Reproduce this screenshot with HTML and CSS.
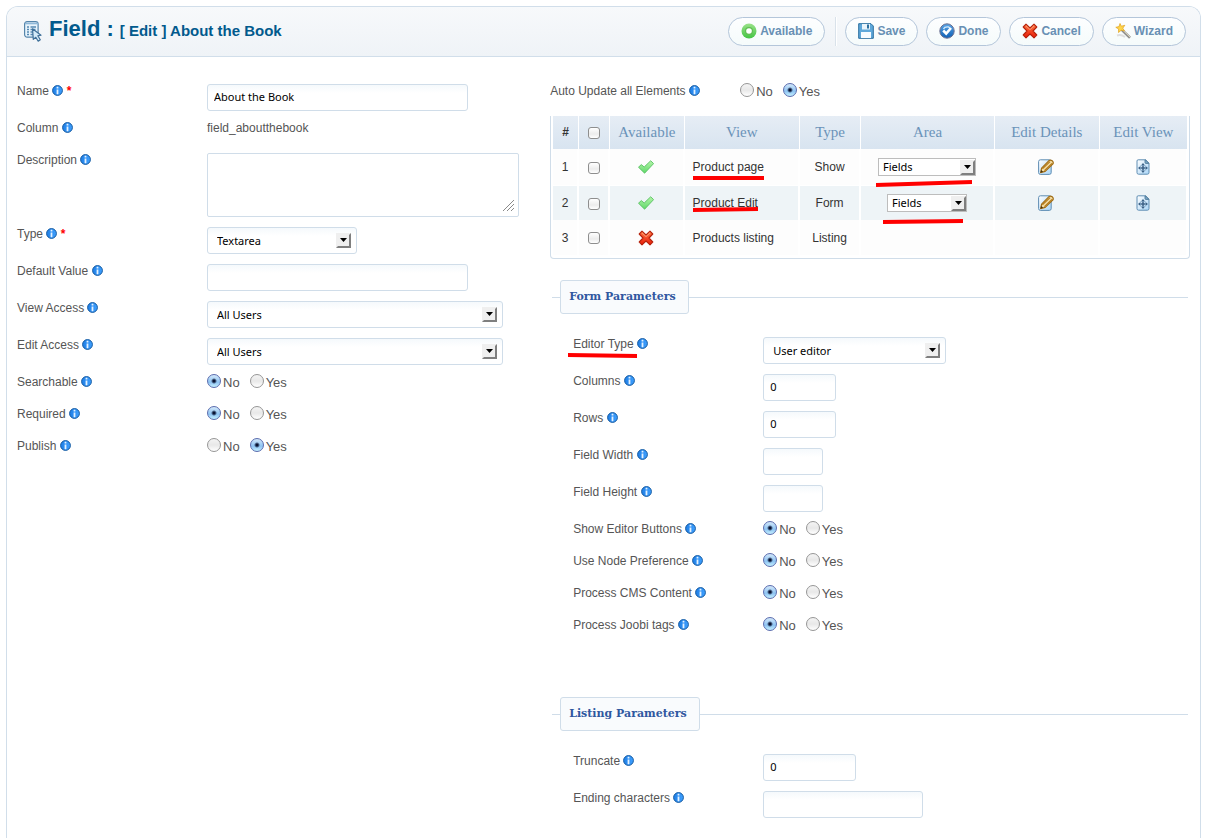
FILE: index.html
```html
<!DOCTYPE html>
<html lang="en">
<head>
<meta charset="utf-8">
<title>Field : [ Edit ] About the Book</title>
<link rel="stylesheet" href="styles.css">
</head>
<body>
<svg class="defs" aria-hidden="true">
  <defs>
    <linearGradient id="g-info" x1="0" y1="0" x2="1" y2="0"><stop offset="0" stop-color="#1f7fe6"/><stop offset="1" stop-color="#3fa0ff"/></linearGradient>
    <linearGradient id="g-green" x1="0" y1="0" x2="0" y2="1"><stop offset="0" stop-color="#9be28a"/><stop offset="1" stop-color="#43c443"/></linearGradient>
    <linearGradient id="g-check" x1="0" y1="0" x2="0" y2="1"><stop offset="0" stop-color="#b4f5a8"/><stop offset="1" stop-color="#5fd86a"/></linearGradient>
    <linearGradient id="g-blue" x1="0" y1="0" x2="0" y2="1"><stop offset="0" stop-color="#5aa5e6"/><stop offset="1" stop-color="#0f5fb4"/></linearGradient>
    <linearGradient id="g-red" x1="0" y1="0" x2="0" y2="1"><stop offset="0" stop-color="#ff7a45"/><stop offset="1" stop-color="#e81a08"/></linearGradient>
    <linearGradient id="g-page" x1="0" y1="0" x2="1" y2="1"><stop offset="0" stop-color="#ffffff"/><stop offset="1" stop-color="#a9d5f7"/></linearGradient>
  </defs>
  <symbol id="i-info" viewBox="0 0 11 11">
    <circle cx="5.5" cy="5.500" r="4.900" fill="url(#g-info)" stroke="#14599f"/>
    <path d="M5.500 1.800v1.600M5.500 4.400v4.800" stroke="#e4f2ff" stroke-width="1.800"/>
  </symbol>
  <symbol id="i-arrow" viewBox="0 0 15 15">
    <path d="M0 0h15v15H0z" fill="#efefef"/>
    <path d="M0 15L2 13H13V2L15 0V15Z" fill="#7f7f7f"/>
    <path d="M4 5h7L7.500 9z" fill="#000"/>
  </symbol>
  <symbol id="i-check" viewBox="0 0 16 16">
    <path d="M.5 8.200L3.300 5.600L6.200 8L12.700 1.800L15.600 4.600L6.600 14.200Z" fill="url(#g-check)" stroke="#58bf62" stroke-width=".9" stroke-linejoin="round"/>
  </symbol>
  <symbol id="i-cross" viewBox="0 0 16 16">
    <path d="M4 1.200L8 5L12 1.200L14.800 4L11 8L14.800 12L12 14.800L8 11L4 14.800L1.200 12L5 8L1.200 4Z" fill="url(#g-red)" stroke="#b5220c" stroke-width="1.100" stroke-linejoin="round"/>
    <path d="M4 2.800L8 6.600L12 2.800" fill="none" stroke="#ffb48c" stroke-width=".8"/>
  </symbol>
  <symbol id="i-edit" viewBox="0 0 16 16">
    <rect x=".6" y=".8" width="12.600" height="14.600" rx="1.800" fill="url(#g-page)" stroke="#5f8db3"/>
    <path d="M2.600 13.600L3.600 9.200L11.200 1.400Q12.600 .6 14.200 1.800Q15.800 3.200 15 4.800L7.200 12.400Z" fill="#f3dca4" stroke="#a06c14" stroke-width="1.200" stroke-linejoin="round"/>
    <path d="M4.400 9.800L12 2.600M6.400 11.600L14 4.400" stroke="#b47a18" stroke-width="1.200"/>
    <path d="M2.400 13.800L3.200 11L5.200 12.800Z" fill="#4a3410"/>
  </symbol>
  <symbol id="i-view" viewBox="0 0 16 16">
    <path d="M3.200 .8H10.500L14 4.200V13.600Q14 15.200 12.400 15.200H3.600Q2 15.200 2 13.600V2Q2 .8 3.200 .8Z" fill="url(#g-page)" stroke="#5f8db3"/>
    <path d="M10 1V3.600Q10 4.400 10.800 4.400H13.800L10.500 .8Z" fill="#7fa9c9" stroke="#41708f" stroke-width=".8"/>
    <path d="M8 5V13M4 9H12" stroke="#3d6287" stroke-width="1.600"/>
    <path d="M5.600 6.600H10.400V11.400H5.600Z" fill="none" stroke="#8fb2cf" stroke-width=".8"/>
    <path d="M8 4L9.800 6.200H6.200ZM8 14L9.800 11.800H6.200ZM3 9L5.200 7.200V10.800ZM13 9L10.800 7.200V10.800Z" fill="#3d6287"/>
  </symbol>
</svg>

<main class="panel">
  <header class="toolbar">
    <h1 class="title">
      <svg class="title-icon" viewBox="0 0 20 22" aria-hidden="true">
        <rect x="1.600" y="1.600" width="13.500" height="15.500" rx="2.500" fill="#e8f4fc" stroke="#5585ab" stroke-width="1.200"/>
        <path d="M2 3.500H15" stroke="#8fb8d8" stroke-width="1.600"/>
        <path d="M4 7h2M7.500 7h5.500M4 9.500h2M7.500 9.500h5M4 12h2M7.500 12h3.500M4 14.500h2M7.500 14.500h3.500" stroke="#5589b3" stroke-width="1.300"/>
        <path d="M9.500 8.800L18 15.200L14.800 15.800L17.300 19.800L15.200 21.200L12.800 17.300L10.300 19.400Z" fill="#d4ebf9" stroke="#3f7099" stroke-width="1.200" stroke-linejoin="round"/>
      </svg>
      <span>Field :</span>
      <small class="subtitle">[ Edit ] About the Book</small>
    </h1>
    <div class="actions">
      <button class="pill" type="button">
        <svg class="icon" viewBox="0 0 16 16" aria-hidden="true"><circle cx="8" cy="8" r="7.500" fill="url(#g-green)"/><circle cx="8" cy="8" r="4" fill="#5fbf52"/><circle cx="8" cy="8" r="2.800" fill="#fff"/></svg>Available</button>
      <span class="divider"></span>
      <button class="pill" type="button">
        <svg class="icon" viewBox="0 0 16 16" aria-hidden="true"><path d="M.7 .7H13L15.300 3V15.300H.7Z" fill="#5fa8da" stroke="#2b6f9f"/><path d="M4 1H12V6.500H4Z" fill="#e9f4fb"/><path d="M9 1.500h2v4h-2z" fill="#2b6f9f"/><path d="M3 9H13V15H3Z" fill="#f6fbff"/></svg>Save</button>
      <button class="pill" type="button">
        <svg class="icon" viewBox="0 0 16 16" aria-hidden="true"><circle cx="8" cy="8" r="7.200" fill="url(#g-blue)" stroke="#6c7090"/><path d="M4.500 6Q5.500 3.500 9.500 4L11 5" fill="none" stroke="#cfe8fb" stroke-width="1.300"/><path d="M4.200 7.500L7.200 10.500L12 5" fill="none" stroke="#fff" stroke-width="2.600"/></svg>Done</button>
      <button class="pill" type="button"><svg class="icon" aria-hidden="true"><use href="#i-cross"/></svg>Cancel</button>
      <button class="pill" type="button">
        <svg class="icon" viewBox="0 0 16 16" aria-hidden="true"><path d="M2 12.500Q6 11 10 14" fill="none" stroke="#dedede" stroke-width="2"/><path d="M6.500 6.500L15 14.800" stroke="#8f8f8f" stroke-width="2.600"/><path d="M7 6.300L15 14" stroke="#e0d9c0" stroke-width="1"/><path d="M5 .5L6.300 3.200L9.800 2.300L7.800 5.200L9.500 8L6.300 7.200L3.500 9.500L3.600 6L.8 4.300L4 3.600Z" fill="#ffd54a" stroke="#e0a020" stroke-width=".7"/></svg>Wizard</button>
    </div>
  </header>

  <form class="columns">
    <section class="col">
      <div class="row">
        <label class="name" for="name">Name <svg class="info"><use href="#i-info"/></svg> <b class="req">*</b></label>
        <input class="text w-261" id="name" type="text" value="About the Book">
      </div>
      <div class="row short">
        <span class="name">Column <svg class="info"><use href="#i-info"/></svg></span>
        <span class="value">field_aboutthebook</span>
      </div>
      <div class="row">
        <label class="name" for="desc">Description <svg class="info"><use href="#i-info"/></svg></label>
        <span class="area"><textarea id="desc"></textarea>
          <svg class="grip" viewBox="0 0 11 11" aria-hidden="true"><path d="M0 11L11 0M4 11L11 4M8 11L11 8" stroke="#8a8a8a"/></svg></span>
      </div>
      <div class="row">
        <label class="name" for="type">Type <svg class="info"><use href="#i-info"/></svg> <b class="req">*</b></label>
        <span class="pick w-150"><select id="type"><option>Textarea</option></select><svg class="arrow"><use href="#i-arrow"/></svg></span>
      </div>
      <div class="row">
        <label class="name" for="default">Default Value <svg class="info"><use href="#i-info"/></svg></label>
        <input class="text w-261" id="default" type="text">
      </div>
      <div class="row">
        <label class="name" for="view">View Access <svg class="info"><use href="#i-info"/></svg></label>
        <span class="pick w-296"><select id="view"><option>All Users</option></select><svg class="arrow"><use href="#i-arrow"/></svg></span>
      </div>
      <div class="row">
        <label class="name" for="edit">Edit Access <svg class="info"><use href="#i-info"/></svg></label>
        <span class="pick w-296"><select id="edit"><option>All Users</option></select><svg class="arrow"><use href="#i-arrow"/></svg></span>
      </div>
      <div class="row short" role="radiogroup" aria-labelledby="l-search">
        <span class="name" id="l-search">Searchable <svg class="info"><use href="#i-info"/></svg></span>
        <span class="yesno"><label><input type="radio" name="search" checked>No</label><label><input type="radio" name="search">Yes</label></span>
      </div>
      <div class="row short" role="radiogroup" aria-labelledby="l-required">
        <span class="name" id="l-required">Required <svg class="info"><use href="#i-info"/></svg></span>
        <span class="yesno"><label><input type="radio" name="required" checked>No</label><label><input type="radio" name="required">Yes</label></span>
      </div>
      <div class="row short" role="radiogroup" aria-labelledby="l-publish">
        <span class="name" id="l-publish">Publish <svg class="info"><use href="#i-info"/></svg></span>
        <span class="yesno"><label><input type="radio" name="publish">No</label><label><input type="radio" name="publish" checked>Yes</label></span>
      </div>
    </section>

    <section class="col">
      <div class="row short" role="radiogroup" aria-labelledby="l-auto">
        <span class="name" id="l-auto">Auto Update all Elements <svg class="info"><use href="#i-info"/></svg></span>
        <span class="yesno"><label><input type="radio" name="auto">No</label><label><input type="radio" name="auto" checked>Yes</label></span>
      </div>

      <div class="grid-box">
        <table class="grid">
          <colgroup><col class="c-num"><col class="c-chk"><col class="c-avail"><col class="c-view"><col class="c-type"><col class="c-area"><col class="c-details"><col class="c-edit"></colgroup>
          <thead>
            <tr><th class="num">#</th><th><input type="checkbox" aria-label="Select all"></th><th>Available</th><th>View</th><th>Type</th><th>Area</th><th>Edit Details</th><th>Edit View</th></tr>
          </thead>
          <tbody>
            <tr>
              <td>1</td><td><input type="checkbox" aria-label="Select row 1"></td>
              <td><svg class="icon"><use href="#i-check"/></svg></td>
              <td class="left"><span class="marked"><a href="#">Product page</a><svg class="mark mark-text" viewBox="0 0 72 6" preserveAspectRatio="none"><path d="M0 3H72" stroke="#f00" stroke-width="4"/></svg></span></td>
              <td>Show</td>
              <td><span class="marked"><span class="mini w-98"><select aria-label="Area of Product page"><option>Fields</option></select><svg class="arrow"><use href="#i-arrow"/></svg></span><svg class="mark mark-area" viewBox="0 0 96 8" preserveAspectRatio="none"><path d="M0 6L96 3" stroke="#f00" stroke-width="4"/></svg></span></td>
              <td><button class="plain" type="button" aria-label="Edit details"><svg class="icon"><use href="#i-edit"/></svg></button></td>
              <td><button class="plain" type="button" aria-label="Edit view"><svg class="icon"><use href="#i-view"/></svg></button></td>
            </tr>
            <tr>
              <td>2</td><td><input type="checkbox" aria-label="Select row 2"></td>
              <td><svg class="icon"><use href="#i-check"/></svg></td>
              <td class="left"><span class="marked"><a href="#">Product Edit</a><svg class="mark mark-close" viewBox="0 0 65 6" preserveAspectRatio="none"><path d="M0 4L65 3" stroke="#f00" stroke-width="4"/></svg></span></td>
              <td>Form</td>
              <td><span class="marked"><span class="mini w-80"><select aria-label="Area of Product Edit"><option>Fields</option></select><svg class="arrow"><use href="#i-arrow"/></svg></span><svg class="mark mark-low" viewBox="0 0 80 6" preserveAspectRatio="none"><path d="M0 4L80 3" stroke="#f00" stroke-width="4"/></svg></span></td>
              <td><button class="plain" type="button" aria-label="Edit details"><svg class="icon"><use href="#i-edit"/></svg></button></td>
              <td><button class="plain" type="button" aria-label="Edit view"><svg class="icon"><use href="#i-view"/></svg></button></td>
            </tr>
            <tr>
              <td>3</td><td><input type="checkbox" aria-label="Select row 3"></td>
              <td><svg class="icon"><use href="#i-cross"/></svg></td>
              <td class="left">Products listing</td><td>Listing</td><td></td><td></td><td></td>
            </tr>
          </tbody>
        </table>
      </div>

      <fieldset class="group first">
        <legend>Form Parameters</legend>
        <div class="row">
          <label class="name" for="editor"><span class="marked">Editor Type<svg class="mark mark-label" viewBox="0 0 69 6" preserveAspectRatio="none"><path d="M0 3L69 4" stroke="#f00" stroke-width="4"/></svg></span> <svg class="info"><use href="#i-info"/></svg></label>
          <span class="pick w-183"><select id="editor"><option>User editor</option></select><svg class="arrow"><use href="#i-arrow"/></svg></span>
        </div>
        <div class="row">
          <label class="name" for="cols">Columns <svg class="info"><use href="#i-info"/></svg></label>
          <input class="text w-73" id="cols" type="text" value="0">
        </div>
        <div class="row">
          <label class="name" for="rows">Rows <svg class="info"><use href="#i-info"/></svg></label>
          <input class="text w-73" id="rows" type="text" value="0">
        </div>
        <div class="row">
          <label class="name" for="width">Field Width <svg class="info"><use href="#i-info"/></svg></label>
          <input class="text w-60" id="width" type="text">
        </div>
        <div class="row">
          <label class="name" for="height">Field Height <svg class="info"><use href="#i-info"/></svg></label>
          <input class="text w-60" id="height" type="text">
        </div>
        <div class="row short" role="radiogroup" aria-labelledby="l-buttons">
          <span class="name" id="l-buttons">Show Editor Buttons <svg class="info"><use href="#i-info"/></svg></span>
          <span class="yesno"><label><input type="radio" name="buttons" checked>No</label><label><input type="radio" name="buttons">Yes</label></span>
        </div>
        <div class="row short" role="radiogroup" aria-labelledby="l-node">
          <span class="name" id="l-node">Use Node Preference <svg class="info"><use href="#i-info"/></svg></span>
          <span class="yesno"><label><input type="radio" name="node" checked>No</label><label><input type="radio" name="node">Yes</label></span>
        </div>
        <div class="row short" role="radiogroup" aria-labelledby="l-cms">
          <span class="name" id="l-cms">Process CMS Content <svg class="info"><use href="#i-info"/></svg></span>
          <span class="yesno"><label><input type="radio" name="cms" checked>No</label><label><input type="radio" name="cms">Yes</label></span>
        </div>
        <div class="row short" role="radiogroup" aria-labelledby="l-tags">
          <span class="name" id="l-tags">Process Joobi tags <svg class="info"><use href="#i-info"/></svg></span>
          <span class="yesno"><label><input type="radio" name="tags" checked>No</label><label><input type="radio" name="tags">Yes</label></span>
        </div>
      </fieldset>

      <fieldset class="group">
        <legend>Listing Parameters</legend>
        <div class="row">
          <label class="name" for="truncate">Truncate <svg class="info"><use href="#i-info"/></svg></label>
          <input class="text w-93" id="truncate" type="text" value="0">
        </div>
        <div class="row">
          <label class="name" for="ending">Ending characters <svg class="info"><use href="#i-info"/></svg></label>
          <input class="text w-160" id="ending" type="text">
        </div>
      </fieldset>
    </section>
  </form>
</main>
</body>
</html>
```
FILE: styles.css
```css
* { box-sizing: border-box; }

body {
  margin: 6px 6px 0;
  background: #fff;
  color: #555;
  font: 12px/14px "Liberation Sans", Arial, sans-serif;
}

.defs { position: absolute; width: 0; height: 0; }

.panel {
  min-height: calc(100vh - 6px);
  border: 1px solid #d1deea;
  border-bottom: 0;
  border-radius: 12px 12px 0 0;
}

/* Header bar */
.toolbar {
  display: flex;
  align-items: center;
  justify-content: space-between;
  height: 50px;
  padding: 0 14px 0 16px;
  border-bottom: 1px solid #d1deea;
  border-radius: 11px 11px 0 0;
  background: linear-gradient(#f7f9fb, #eff3f7);
}
.title {
  display: flex;
  align-items: center;
  gap: 6px;
  margin: 0;
  padding-bottom: 6px;
  color: #025a8d;
  font-size: 22px;
  line-height: 24px;
  white-space: nowrap;
}
.title-icon { width: 20px; height: 22px; margin-top: 4px; }
.subtitle { padding-top: 4px; font-size: 15px; }
.actions { display: flex; align-items: center; gap: 8px; }
.pill {
  display: flex;
  align-items: center;
  gap: 3px;
  height: 29px;
  padding: 0 12px 1px;
  border: 1px solid #b4c6da;
  border-radius: 15px;
  background: linear-gradient(#fdfeff, #f5fbfb);
  color: #6890b4;
  font: bold 12px/14px "Liberation Sans", Arial, sans-serif;
}
.divider {
  width: 2px;
  height: 29px;
  margin-left: 2px;
  border-left: 1px solid #d9e2ea;
  background: #fff;
}
.icon { display: block; width: 16px; height: 16px; flex: none; }

/* Form rows */
.columns {
  display: grid;
  grid-template-columns: 5fr 6fr;
  padding: 27px 10px 20px;
}
.row { display: flex; align-items: flex-start; padding-bottom: 10px; }
.row.short { height: 32px; padding-bottom: 0; }
.name { width: 190px; flex: none; white-space: nowrap; }
.info { width: 11px; height: 11px; vertical-align: -1px; }
.req { color: #f00; }

.text, textarea, .pick select {
  display: block;
  margin: 0;
  border: 1px solid #d0dde9;
  border-radius: 3px;
  background: #fff linear-gradient(#f5f9fc, #fff 8px);
  color: #000;
  font: 11px/15px "Noto Sans", "Open Sans", sans-serif;
}
.text { height: 27px; padding: 0 6px 2px; }
textarea {
  width: 312px;
  height: 64px;
  padding: 5px;
  border-radius: 2px;
  background: #fff;
  resize: none;
}
.area { position: relative; }
.grip { position: absolute; right: 5px; bottom: 6px; width: 11px; height: 11px; pointer-events: none; }

.pick, .mini { position: relative; display: inline-block; }
.pick select { width: 100%; height: 27px; padding: 0 24px 0 9px; appearance: none; }
.pick .arrow { right: 6px; top: 6px; }
.arrow { position: absolute; width: 15px; height: 15px; pointer-events: none; }
.mini { display: block; }
.mini select {
  display: block;
  width: 100%;
  height: 18px;
  margin: 0;
  padding: 0 18px 1px 4px;
  border: 1px solid #bdbdbd;
  border-radius: 0;
  background: #fff;
  color: #000;
  font: 11px/15px "Noto Sans", "Open Sans", sans-serif;
  appearance: none;
}
.mini .arrow { right: 1px; top: 2px; }

.w-60 { width: 60px; }
.w-73 { width: 73px; }
.w-80 { width: 80px; }
.w-93 { width: 93px; }
.w-98 { width: 98px; }
.w-150 { width: 150px; }
.w-160 { width: 160px; }
.w-183 { width: 183px; }
.w-261 { width: 261px; }
.w-296 { width: 296px; }

/* Radios and tick boxes */
.yesno { display: flex; gap: 10px; font-size: 13px; line-height: 16px; }
.yesno label { display: flex; align-items: flex-start; gap: 2px; }
input[type="radio"] {
  width: 14px;
  height: 14px;
  margin: -1px 0 0;
  border: 1px solid #969696;
  border-radius: 50%;
  background: linear-gradient(#f4f4f4, #e8e8e8 50%, #fff);
  appearance: none;
}
input[type="radio"]:checked {
  border-color: #5a6cae;
  background: radial-gradient(circle, #0a1433 0 1px, transparent 3px), linear-gradient(#d3e8fa, #8dc3f2 60%, #c4f0ff);
}
input[type="checkbox"] {
  display: block;
  width: 12px;
  height: 12px;
  margin: 1px auto 0;
  border: 1px solid #8e8e8e;
  border-radius: 3px;
  background: linear-gradient(#fff, #ececec 60%, #fff);
  appearance: none;
}

/* Views table */
.grid-box {
  padding: 0 1px 3px 2px;
  border: 1px solid #d0dde9;
  border-top: 0;
  border-radius: 0 0 4px 4px;
}
.grid {
  width: 100%;
  border-collapse: separate;
  border-spacing: 0;
  table-layout: fixed;
  color: #333;
  text-align: center;
}
.c-num { width: 4.1%; }
.c-chk { width: 4.9%; }
.c-avail { width: 11.7%; }
.c-view { width: 18.2%; }
.c-type { width: 9.6%; }
.c-area { width: 21.1%; }
.c-details { width: 16.5%; }
.c-edit { width: 13.9%; }
.grid th, .grid td { padding: 0; border-right: 1px solid #fff; }
.grid th {
  height: 33px;
  padding-bottom: 1px;
  background: linear-gradient(#e6edf5, #d8e4f0);
  color: #6b93b9;
  font: 15px/18px "Liberation Serif", "Times New Roman", serif;
}
.grid th.num { color: #333; font: bold 12px/14px "Liberation Sans", Arial, sans-serif; }
.grid td {
  height: 35px;
  border-right-width: 2px;
  background: #fdfdfd;
}
.grid tbody tr:nth-child(1) td { height: 37px; border-bottom: 1px solid #fff; }
.grid tbody tr:nth-child(2) td { height: 34px; background: #eef4f7; }
.grid td.left { padding-left: 8px; text-align: left; }
.grid .icon { margin: 0 auto; }
.grid a { color: inherit; text-decoration: none; }
.plain { display: block; margin: 0 auto; padding: 0; border: 0; background: none; }

/* Hand-drawn red underlines laid over the content */
.marked { position: relative; display: inline-block; vertical-align: middle; }
.mark { position: absolute; left: 0; pointer-events: none; }
.mark-text { top: 15px; width: 100%; height: 6px; }
.mark-close { top: 10px; width: 100%; height: 6px; }
.mark-area { top: 21px; left: -2px; width: 96px; height: 8px; }
.mark-low { top: 24px; left: -4px; width: 80px; height: 6px; }
.mark-label { top: 15px; left: -5px; width: 69px; height: 6px; }
.name .marked { vertical-align: baseline; }

/* Parameter groups */
.group {
  margin: 0 2px 47px;
  padding: 23px 21px 0;
  border: 0;
  border-top: 1px solid #d0dde9;
}
.group.first { margin-top: 21px; }
.group .row:last-child { padding-bottom: 0; }
.group:last-child { margin-bottom: 0; }
.group legend {
  margin-left: -13px;
  padding: 9px 12px 9px 8px;
  border: 1px solid #d0dde9;
  border-radius: 3px;
  background: #f9fbfd;
  color: #2f57a0;
  font: bold 11px/14px "DejaVu Serif", serif;
}
```
